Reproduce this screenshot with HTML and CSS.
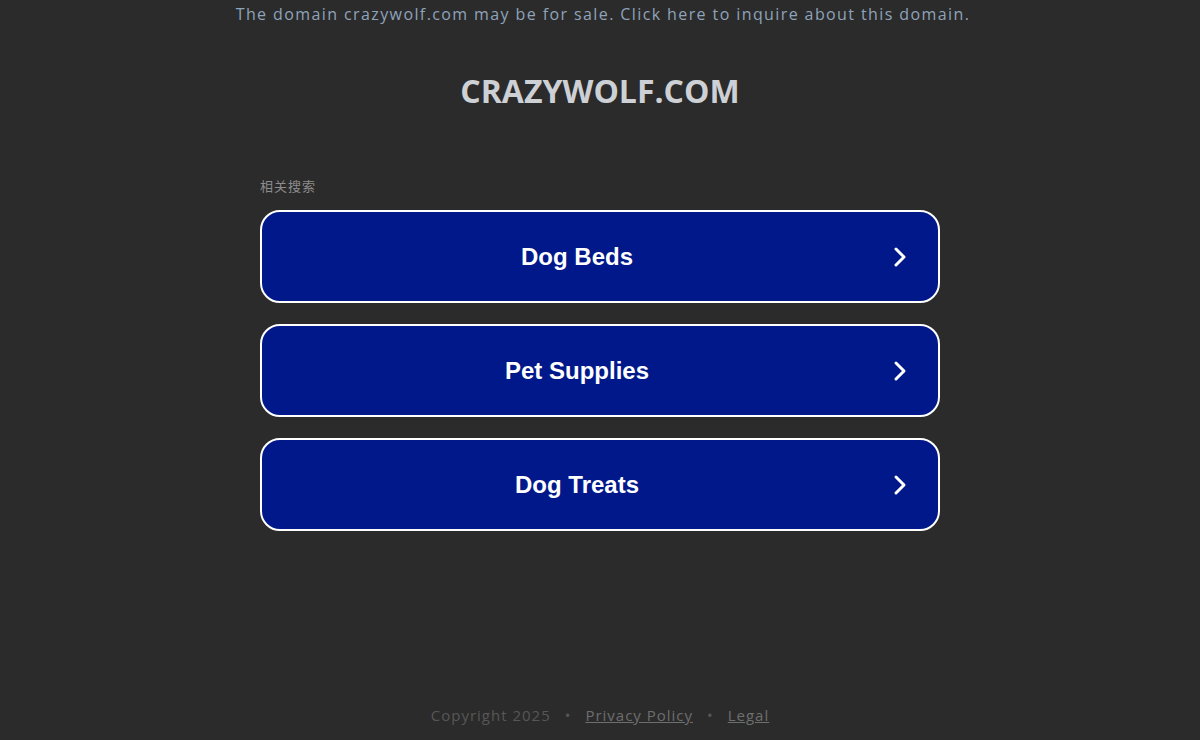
FILE: index.html
```html
<!DOCTYPE html>
<html lang="en">
<head>
<meta charset="utf-8">
<title>crazywolf.com</title>
<link rel="stylesheet" href="styles.css">
</head>
<body>
<div class="page">
  <div class="banner">The domain crazywolf.com may be for sale. Click here to inquire about this domain.</div>
  <h1 class="title">CRAZYWOLF.COM</h1>
  <div class="related">
    <div class="label">相关搜索</div>
    <a class="btn" href="#"><span class="btn-text">Dog Beds</span><svg class="chev" viewBox="0 0 16 24" width="16" height="24"><path d="M4 4 L12 12 L4 20" fill="none" stroke="#fff" stroke-width="3" stroke-linecap="round" stroke-linejoin="round"/></svg></a>
    <a class="btn" href="#"><span class="btn-text">Pet Supplies</span><svg class="chev" viewBox="0 0 16 24" width="16" height="24"><path d="M4 4 L12 12 L4 20" fill="none" stroke="#fff" stroke-width="3" stroke-linecap="round" stroke-linejoin="round"/></svg></a>
    <a class="btn" href="#"><span class="btn-text">Dog Treats</span><svg class="chev" viewBox="0 0 16 24" width="16" height="24"><path d="M4 4 L12 12 L4 20" fill="none" stroke="#fff" stroke-width="3" stroke-linecap="round" stroke-linejoin="round"/></svg></a>
  </div>
  <div class="spacer"></div>
  <div class="footer">
    <span class="copy">Copyright 2025</span>
    <span class="dot">•</span>
    <a class="flink" href="#">Privacy Policy</a>
    <span class="dot">•</span>
    <a class="flink" href="#">Legal</a>
  </div>
</div>
</body>
</html>
```

FILE: styles.css
```css
html, body {
  margin: 0;
  padding: 0;
  background: #2b2b2b;
}
.page {
  height: 740px;
  display: flex;
  flex-direction: column;
  align-items: center;
  font-family: "Open Sans", "DejaVu Sans", sans-serif;
}
.banner {
  margin-top: 3px;
  padding-left: 6px;
  font-size: 16px;
  line-height: 22px;
  letter-spacing: 1.4px;
  color: #8fa3ba;
}
.title {
  margin: 45px 0 0 0;
  font-size: 32px;
  line-height: 42px;
  font-weight: 700;
  color: #cdd0d4;
}
.related {
  margin-top: 65px;
  width: 680px;
  display: flex;
  flex-direction: column;
  gap: 21px;
}
.label {
  font-family: "Noto Sans CJK SC", sans-serif;
  font-size: 13px;
  line-height: 18px;
  letter-spacing: 1px;
  color: #8c8c8c;
  margin-bottom: -6px;
}
.btn {
  box-sizing: border-box;
  height: 93px;
  border: 2px solid #fff;
  border-radius: 20px;
  background: #00188a;
  display: flex;
  align-items: center;
  text-decoration: none;
  padding: 0 30px 0 0;
}
.btn-text {
  flex: 1;
  text-align: center;
  font-family: "Liberation Sans", Arial, sans-serif;
  font-weight: 700;
  font-size: 24px;
  color: #fff;
}
.chev {
  display: block;
}
.spacer {
  flex: 1;
}
.footer {
  margin-bottom: 15px;
  font-size: 15px;
  line-height: 20px;
  letter-spacing: 1px;
  color: #575757;
  display: flex;
  gap: 14px;
}
.flink {
  color: #6e6e6e;
  text-decoration: underline;
}
```
